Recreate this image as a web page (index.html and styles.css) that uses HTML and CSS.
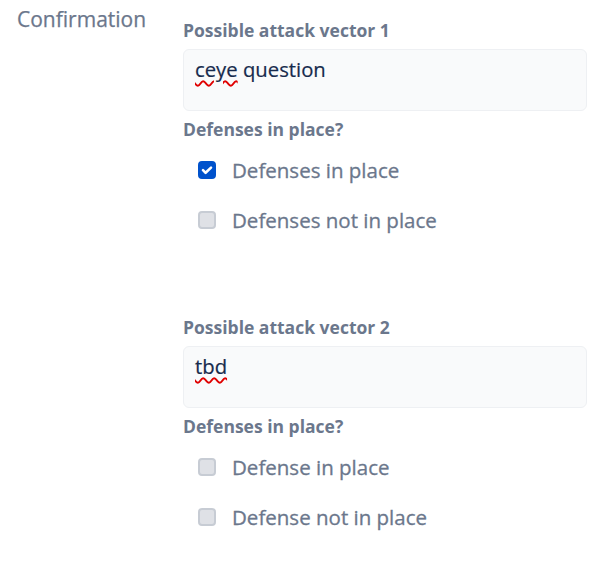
FILE: index.html
```html
<!DOCTYPE html>
<html>
<head>
<meta charset="utf-8">
<link rel="stylesheet" href="styles.css">
</head>
<body>
<div class="row">
  <div class="row-label">Confirmation</div>
  <div class="row-body">
    <div class="vector">
      <div class="field-label">Possible attack vector 1</div>
      <div class="text-input"><span class="misspelled">ceye</span> question</div>
      <div class="field-label q">Defenses in place?</div>
      <div class="options">
        <label class="option"><span class="box checked"><svg viewBox="0 0 18 18" width="18" height="18"><path d="M5 9.2l2.6 2.6L13 6.6" fill="none" stroke="#fff" stroke-width="2.6" stroke-linecap="round" stroke-linejoin="round"/></svg></span><span class="opt-text">Defenses in place</span></label>
        <label class="option"><span class="box"></span><span class="opt-text">Defenses not in place</span></label>
      </div>
    </div>
    <div class="vector second">
      <div class="field-label">Possible attack vector 2</div>
      <div class="text-input"><span class="misspelled">tbd</span></div>
      <div class="field-label q">Defenses in place?</div>
      <div class="options">
        <label class="option"><span class="box"></span><span class="opt-text">Defense in place</span></label>
        <label class="option"><span class="box"></span><span class="opt-text">Defense not in place</span></label>
      </div>
    </div>
  </div>
</div>
</body>
</html>
```
FILE: styles.css
```css
html, body {
  margin: 0;
  padding: 0;
  background: #ffffff;
  font-family: "Open Sans", "Noto Sans", sans-serif;
}
.row {
  display: flex;
  padding-top: 5px;
}
.row-label {
  width: 183px;
  padding-left: 17px;
  box-sizing: border-box;
  font-size: 21px;
  line-height: 28px;
  color: #6b778c;
  -webkit-text-stroke: 0.25px #6b778c;
}
.row-body {
  width: 404px;
  padding-top: 14px;
}
.field-label {
  font-size: 17.5px;
  font-weight: 700;
  color: #6b778c;
  line-height: 22px;
  margin-bottom: 8px;
}
.field-label.q {
  margin-top: 7px;
  margin-bottom: 16px;
}
.text-input {
  height: 62px;
  box-sizing: border-box;
  border: 1px solid #eef0f3;
  border-radius: 6px;
  background: #f9fafb;
  padding: 5px 11px;
  font-size: 20.3px;
  line-height: 28px;
  color: #172b4d;
  -webkit-text-stroke: 0.2px #172b4d;
}
.misspelled {
  text-decoration: underline wavy #e00000;
  text-decoration-thickness: 1.5px;
  text-underline-offset: 3px;
}
.options {
  display: flex;
  flex-direction: column;
  gap: 22px;
  padding-left: 15px;
}
.option {
  display: flex;
  align-items: center;
  gap: 16px;
  height: 28px;
}
.box {
  width: 18px;
  height: 18px;
  box-sizing: border-box;
  border: 2px solid #c7ccd4;
  background: #dfe1e6;
  border-radius: 4px;
  display: flex;
}
.box.checked {
  background: #0052cc;
  border-color: #0052cc;
}
.box.checked svg {
  margin: -2px;
}
.opt-text {
  font-size: 20.5px;
  color: #6b778c;
  -webkit-text-stroke: 0.3px #6b778c;
}
.vector.second {
  margin-top: 82px;
}
```
